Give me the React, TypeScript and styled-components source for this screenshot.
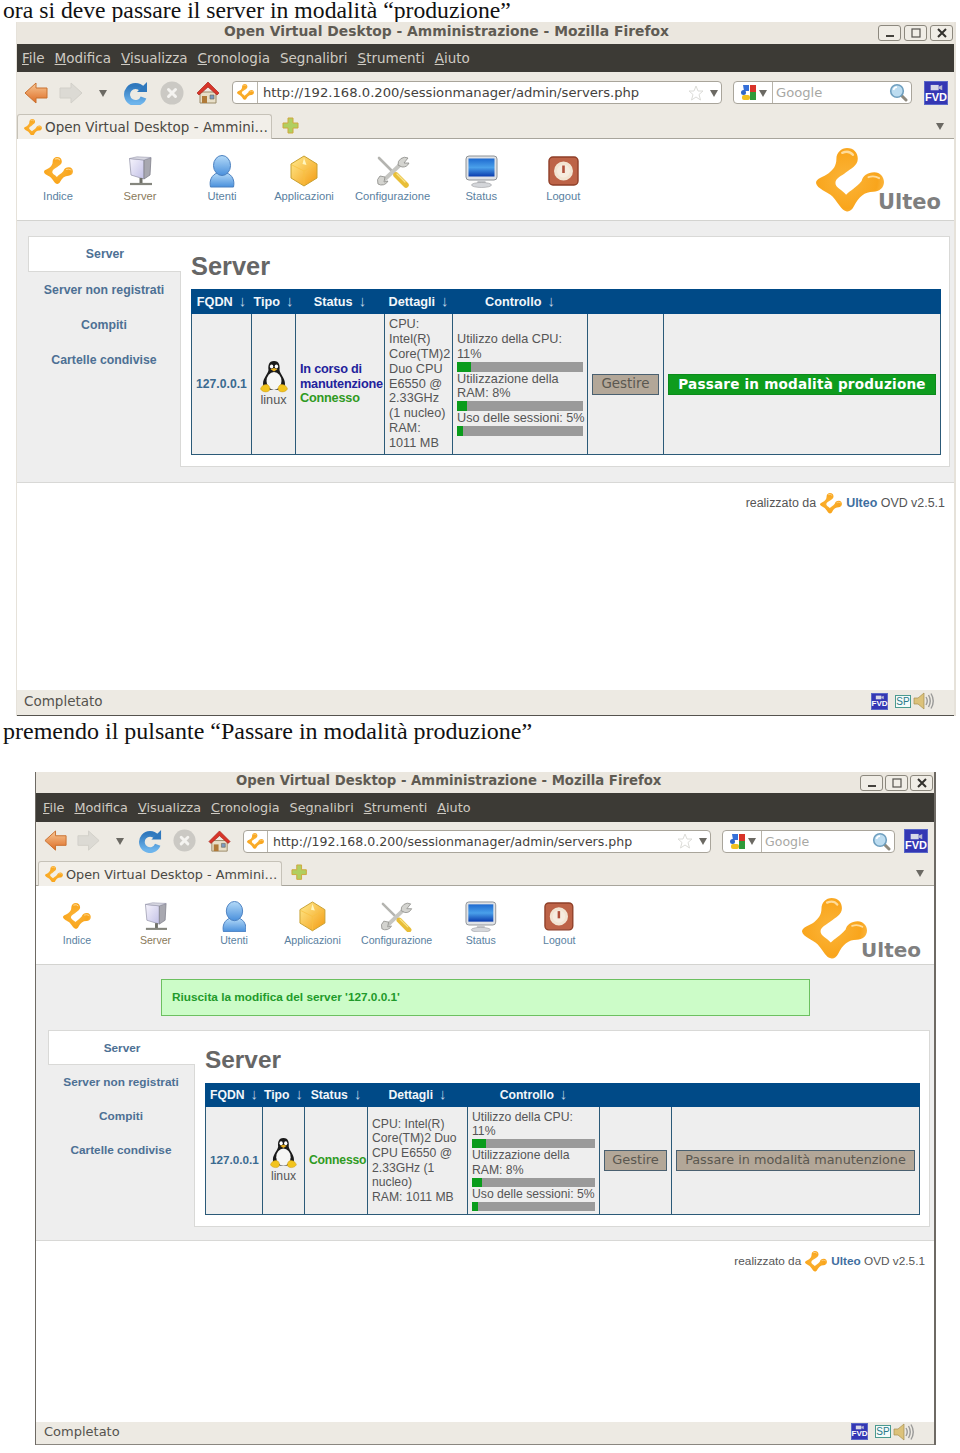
import React from "react";
import styled, { createGlobalStyle } from "styled-components";

const Global = createGlobalStyle`
  html, body { margin: 0; padding: 0; background: #fff; }
  body { width: 960px; height: 1453px; overflow: hidden; }
`;

const UI = `"DejaVu Sans", sans-serif`;
const WEB = `"Liberation Sans", Arial, sans-serif`;

type Cfg = {
  left: number; width: number; frame: string; edge: string; titleLeft: number; titleFs: number;
  titleH: number; btnW: number; btnGap: number; menuH: number; menuFs: number; menuPad: number; menuGap: number;
  navH: number; navPad: number; slots: number[]; urlMl: number; urlW: number; urlIcon: number; searchGap: number; searchW: number; fvdGap: number; urlFs: number;
  tabRowH: number; tabMl: number; tabW: number; tabFs: number; plusMl: number;
  toolH: number; toolPad: number; toolTop: number; toolIconH: number; itemW: number; itemGap: number; labelFs: number; logoRight: number; logoW: number; logoFs: number;
  greyTop: number; greyBottom: number; panelL: number; panelR: number;
  sideW: number; tabH: number; itemH: number; sideFs: number; contentPad: number;
  titleBlock: number; headingFs: number; headFs: number; tableW: number; cols: number[]; headH: number; rowH: number; cellFs: number; lh: number; bar: number;
  contentBottom: number; footerH: number; footerPad: number; footerFs: number; footerRight: number;
  statusH: number; statusPad: number; statusFs: number; statusRight: number;
  details: string[]; btnFs: number; iconScale: number; status2: boolean; actionFs: number; actionSp: number;
};

const A: Cfg = {
  left: 16, width: 940, frame: "#e6e2da", edge: "#55534e", titleLeft: 207, titleFs: 13.87, titleH: 22, btnW: 23, btnGap: 3,
  menuH: 28, menuFs: 13.5, menuPad: 5, menuGap: 10, navH: 41, navPad: 0, slots: [37, 34, 30, 35, 37, 36], urlMl: 6, urlW: 490, urlIcon: 25, searchGap: 11, searchW: 179, fvdGap: 12, urlFs: 13.15,
  tabRowH: 25, tabMl: 0, tabW: 255, tabFs: 13.5, plusMl: 10,
  toolH: 82, toolPad: 10, toolTop: 14, toolIconH: 36, itemW: 62, itemGap: 20, labelFs: 11.2, logoRight: 13, logoW: 68, logoFs: 21,
  greyTop: 15, greyBottom: 15, panelL: 11, panelR: 4, sideW: 152, tabH: 36, itemH: 35, sideFs: 12.3, contentPad: 10,
  titleBlock: 52, headingFs: 25.4, headFs: 12.7, tableW: 749, cols: [60, 44, 89, 68, 135, 76, 277], headH: 23, rowH: 141, cellFs: 12.7, lh: 14.9, bar: 10,
  contentBottom: 11, footerH: 207, footerPad: 10, footerFs: 12.45, footerRight: 9,
  statusH: 26, statusPad: 7, statusFs: 13.5, statusRight: 19,
  details: ["CPU:", "Intel(R)", "Core(TM)2", "Duo CPU", "E6550 @", "2.33GHz", "(1 nucleo)", "RAM:", "1011 MB"],
  btnFs: 13.4, iconScale: 1, status2: true, actionFs: 13.6, actionSp: 0.18,
};

const B: Cfg = {
  left: 35, width: 901, frame: "#6e6a64", edge: "#8a8780", titleLeft: 200, titleFs: 13.25, titleH: 21, btnW: 23, btnGap: 2,
  menuH: 29, menuFs: 12.8, menuPad: 7, menuGap: 10, navH: 38, navPad: 3, slots: [34, 32, 30, 32, 35, 36], urlMl: 5, urlW: 468, urlIcon: 24, searchGap: 11, searchW: 173, fvdGap: 9, urlFs: 12.55,
  tabRowH: 25, tabMl: 2, tabW: 244, tabFs: 12.8, plusMl: 9,
  toolH: 79, toolPad: 11, toolTop: 14, toolIconH: 33, itemW: 60, itemGap: 18.5, labelFs: 10.6, logoRight: 13, logoW: 65, logoFs: 20,
  greyTop: 14, greyBottom: 13, panelL: 12, panelR: 4, sideW: 146, tabH: 35, itemH: 34, sideFs: 11.8, contentPad: 10,
  titleBlock: 52, headingFs: 24.4, headFs: 12.2, tableW: 714, cols: [57, 42, 63, 100, 132, 72, 248], headH: 22, rowH: 108, cellFs: 12.2, lh: 14.6, bar: 9.5,
  contentBottom: 11, footerH: 181, footerPad: 10, footerFs: 11.8, footerRight: 9,
  statusH: 23, statusPad: 8, statusFs: 13, statusRight: 19,
  details: ["CPU: Intel(R)", "Core(TM)2 Duo", "CPU E6550 @", "2.33GHz (1", "nucleo)", "RAM: 1011 MB"],
  btnFs: 13, iconScale: 0.96, status2: false, actionFs: 12.8, actionSp: 0,
};

const Page = styled.div`
  display: flex;
  flex-direction: column;
  width: 960px;
`;
const Caption = styled.p<{ $h: number; $after: number; $fs: number }>`
  margin: 0 0 ${(p) => p.$after}px;
  padding-left: 3px;
  height: ${(p) => p.$h}px;
  font: 400 ${(p) => p.$fs}px/${(p) => p.$h - 2}px "Liberation Serif", "Times New Roman", serif;
  color: #111;
  white-space: nowrap;
`;
const Win = styled.section<{ $left: number; $width: number; $frame: string }>`
  margin-left: ${(p) => p.$left}px;
  width: ${(p) => p.$width}px;
  box-sizing: border-box;
  border-left: 1px solid ${(p) => p.$frame};
  border-right: 2px solid ${(p) => p.$frame};
  background: #fff;
`;
const TitleBar = styled.header<{ $h: number; $l: number; $fs: number }>`
  display: flex;
  align-items: center;
  height: ${(p) => p.$h}px;
  padding-left: ${(p) => p.$l}px;
  background: #ebe7df;
  font: 700 ${(p) => p.$fs}px ${UI};
  color: #5f5b53;
  white-space: nowrap;
`;
const TitleText = styled.span`
  margin-bottom: 4px;
`;
const WinBtns = styled.div<{ $gap: number }>`
  display: flex;
  gap: ${(p) => p.$gap}px;
  margin-left: auto;
  margin-right: 1px;
`;
const WinBtn = styled.span<{ $w: number }>`
  display: flex;
  align-items: center;
  justify-content: center;
  width: ${(p) => p.$w}px;
  height: 16px;
  box-sizing: border-box;
  border: 1px solid #8c887e;
  border-radius: 3px;
  background: #f0ede6;
`;
const MenuBar = styled.nav<{ $h: number; $pad: number; $gap: number; $fs: number }>`
  display: flex;
  align-items: center;
  height: ${(p) => p.$h}px;
  padding-left: ${(p) => p.$pad}px;
  gap: ${(p) => p.$gap}px;
  background: #3c3a35;
  color: #cfcbc3;
  font: 400 ${(p) => p.$fs}px ${UI};
`;
const NavBar = styled.div<{ $h: number; $pad: number }>`
  display: flex;
  align-items: center;
  height: ${(p) => p.$h}px;
  padding-left: ${(p) => p.$pad}px;
  background: #edeae3;
`;
const NavSlot = styled.span<{ $w: number }>`
  display: flex;
  align-items: center;
  justify-content: center;
  width: ${(p) => p.$w}px;
`;
const Field = styled.div<{ $w: number; $ml: number }>`
  display: flex;
  align-items: center;
  box-sizing: border-box;
  width: ${(p) => p.$w}px;
  height: 23px;
  margin-left: ${(p) => p.$ml}px;
  border: 1px solid #a9a59b;
  border-radius: 4px;
  background: #fff;
`;
const FieldIcon = styled.span<{ $w: number }>`
  display: flex;
  align-items: center;
  justify-content: center;
  gap: 2px;
  box-sizing: border-box;
  width: ${(p) => p.$w}px;
  height: 100%;
  border-right: 1px solid #b8b4aa;
`;
const UrlText = styled.span<{ $fs: number }>`
  margin-left: 5px;
  font: 400 ${(p) => p.$fs}px ${UI};
  color: #44423d;
  white-space: nowrap;
`;
const Hint = styled.span<{ $fs: number }>`
  margin-left: 3px;
  font: 400 ${(p) => p.$fs}px ${UI};
  color: #a8a8a4;
`;
const FieldEnd = styled.span`
  display: flex;
  align-items: center;
  gap: 6px;
  margin-left: auto;
  margin-right: 3px;
`;
const Fvd = styled.span<{ $w: number; $fs: number; $ml?: number }>`
  display: flex;
  flex-direction: column;
  align-items: center;
  justify-content: flex-end;
  box-sizing: border-box;
  width: ${(p) => p.$w}px;
  height: ${(p) => p.$w}px;
  margin-left: ${(p) => p.$ml ?? 0}px;
  background: #3437b4;
  border: 1px solid #5a68c8;
  color: #fff;
  font: 700 ${(p) => p.$fs}px/1 ${WEB};
  padding-bottom: 1px;
`;
const TabRow = styled.div<{ $h: number; $ml: number }>`
  display: flex;
  align-items: flex-end;
  height: ${(p) => p.$h}px;
  padding-left: ${(p) => p.$ml}px;
  background: #edeae3;
  border-bottom: 1px solid #a8a59c;
`;
const Tab = styled.div<{ $w: number; $fs: number }>`
  display: flex;
  align-items: center;
  gap: 3px;
  box-sizing: border-box;
  width: ${(p) => p.$w}px;
  height: 100%;
  margin-bottom: -1px;
  padding-left: 6px;
  border: 1px solid #c6c2b8;
  border-bottom: 0;
  border-radius: 3px 3px 0 0;
  background: #f2efe9;
  font: 400 ${(p) => p.$fs}px ${UI};
  color: #4a4843;
  white-space: nowrap;
`;
const PlusWrap = styled.span<{ $ml: number }>`
  display: flex;
  align-self: center;
  margin-left: ${(p) => p.$ml}px;
`;
const TabMenu = styled.span`
  display: flex;
  align-self: center;
  margin-left: auto;
  margin-right: 10px;
`;
const Toolbar = styled.div<{ $h: number; $pad: number; $top: number; $gap: number }>`
  display: flex;
  gap: ${(p) => p.$gap}px;
  box-sizing: border-box;
  height: ${(p) => p.$h}px;
  padding: ${(p) => p.$top}px 0 0 ${(p) => p.$pad}px;
  border-bottom: 1px solid #d3d3d0;
  background: #fff;
`;
const ToolItem = styled.div<{ $w: number; $fs: number; $active?: boolean }>`
  display: flex;
  flex-direction: column;
  align-items: center;
  min-width: ${(p) => p.$w}px;
  font: 400 ${(p) => p.$fs}px/14px ${WEB};
  color: ${(p) => (p.$active ? "#8a7a5a" : "#5a7f9f")};
`;
const ToolIcon = styled.span<{ $h: number }>`
  display: flex;
  align-items: center;
  justify-content: center;
  height: ${(p) => p.$h}px;
`;
const Logo = styled.div<{ $r: number }>`
  display: flex;
  align-items: flex-end;
  margin: -6px ${(p) => p.$r}px 0 auto;
  height: 65px;
`;
const LogoText = styled.span<{ $fs: number }>`
  margin-left: -6px;
  font: 700 ${(p) => p.$fs}px/${(p) => p.$fs - 2}px ${UI};
  color: #7f7f7f;
`;
const Grey = styled.main<{ $top: number; $bottom: number; $l: number; $r: number }>`
  display: flex;
  flex-direction: column;
  gap: 14px;
  padding: ${(p) => p.$top}px ${(p) => p.$r}px ${(p) => p.$bottom}px ${(p) => p.$l}px;
  background: #eeeeee;
  border-bottom: 1px solid #d8d8d6;
`;
const Message = styled.div`
  box-sizing: border-box;
  width: 649px;
  height: 37px;
  margin-left: 113px;
  padding-left: 10px;
  border: 1px solid #6cc060;
  background: #ccfcc8;
  font: 700 11.8px/35px ${WEB};
  color: #1f9a2b;
`;
const Panel = styled.div`
  display: flex;
`;
const Side = styled.aside<{ $w: number; $fs: number }>`
  flex: none;
  width: ${(p) => p.$w}px;
  font: 700 ${(p) => p.$fs}px ${WEB};
  color: #4d7094;
`;
const SideTab = styled.div<{ $h: number }>`
  position: relative;
  display: flex;
  align-items: center;
  justify-content: center;
  box-sizing: border-box;
  height: ${(p) => p.$h}px;
  margin-right: -1px;
  border: 1px solid #d9d9d7;
  border-right: 0;
  background: #fff;
`;
const SideItem = styled.div<{ $h: number }>`
  display: flex;
  align-items: center;
  justify-content: center;
  height: ${(p) => p.$h}px;
`;
const Content = styled.div<{ $pad: number; $bottom: number }>`
  flex: 1;
  padding: 0 0 ${(p) => p.$bottom}px ${(p) => p.$pad}px;
  border: 1px solid #d9d9d7;
  background: #fff;
`;
const Heading = styled.h1<{ $h: number; $fs: number }>`
  display: flex;
  align-items: center;
  box-sizing: border-box;
  height: ${(p) => p.$h}px;
  margin: 0;
  padding-top: 6px;
  font: 700 ${(p) => p.$fs}px ${WEB};
  color: #666;
`;
const Table = styled.table<{ $w: number; $fs: number; $lh: number }>`
  width: ${(p) => p.$w}px;
  table-layout: fixed;
  border-collapse: collapse;
  font: 400 ${(p) => p.$fs}px/${(p) => p.$lh}px ${WEB};
  color: #555;
`;
const Col = styled.col<{ $w: number }>`
  width: ${(p) => p.$w}px;
`;
const Th = styled.th<{ $h: number }>`
  height: ${(p) => p.$h}px;
  padding: 0;
  background: #004a87;
  border: 1px solid #004a87;
  color: #f2f6fa;
  font-weight: 700;
  text-align: center;
  white-space: nowrap;
`;
const ThArrow = styled.span`
  margin-left: 6px;
  color: #c0d2e4;
  font-size: 15px;
  font-weight: 400;
`;
const Td = styled.td<{ $h: number }>`
  height: ${(p) => p.$h}px;
  padding: 0 4px;
  background: #eeeeee;
  border: 1px solid #2b5a78;
  vertical-align: middle;
  box-sizing: border-box;
`;
const Fqdn = styled.span`
  font-size: 0.96em;
  font-weight: 700;
  color: #3a6a90;
  white-space: nowrap;
`;
const OsCell = styled.div`
  display: flex;
  flex-direction: column;
  align-items: center;
`;
const StatusLine = styled.div<{ $c: string }>`
  font-weight: 700;
  color: ${(p) => p.$c};
  white-space: nowrap;
  letter-spacing: -0.2px;
`;
const Line = styled.div`
  white-space: nowrap;
`;
const Bar = styled.div<{ $h: number }>`
  height: ${(p) => p.$h}px;
  background: #9a9a9a;
`;
const BarFill = styled.div<{ $pct: number }>`
  height: 100%;
  width: ${(p) => p.$pct}%;
  background: #0a9c1c;
`;
const ActionBtn = styled.div<{ $fs: number; $sp?: number; $green?: boolean }>`
  box-sizing: border-box;
  height: 21px;
  border: 1px solid ${(p) => (p.$green ? "#0b8a1a" : "#4a6070")};
  background: ${(p) => (p.$green ? "#0e9c1e" : "#b3a798")};
  color: ${(p) => (p.$green ? "#fff" : "#5a5750")};
  font: ${(p) => (p.$green ? 700 : 400)} ${(p) => p.$fs}px/18px ${UI};
  letter-spacing: ${(p) => p.$sp ?? 0}px;
  text-align: center;
  white-space: nowrap;
`;
const Footer = styled.footer<{ $h: number; $pad: number; $fs: number; $r: number }>`
  display: flex;
  align-items: flex-start;
  justify-content: flex-end;
  gap: 4px;
  box-sizing: border-box;
  height: ${(p) => p.$h}px;
  padding: ${(p) => p.$pad}px ${(p) => p.$r}px 0 0;
  background: #fff;
  font: 400 ${(p) => p.$fs}px/20px ${WEB};
  color: #555;
`;
const Brand = styled.b`
  font-weight: 700;
  color: #3f6f9f;
`;
const StatusBar = styled.div<{ $h: number; $pad: number; $fs: number; $r: number; $edge: string }>`
  display: flex;
  align-items: center;
  box-sizing: border-box;
  height: ${(p) => p.$h}px;
  padding: 0 ${(p) => p.$r}px 3px ${(p) => p.$pad}px;
  background: #edeae3;
  border-bottom: 1px solid ${(p) => p.$edge};
  font: 400 ${(p) => p.$fs}px ${UI};
  color: #55534e;
`;
const StatusIcons = styled.div`
  display: flex;
  align-items: center;
  gap: 7px;
  margin-left: auto;
`;
const Sp = styled.span`
  box-sizing: border-box;
  width: 16px;
  height: 13px;
  margin-right: -5px;
  border: 1px solid #4a9a90;
  background: #f4fbfa;
  color: #2a7a88;
  font: 400 10px/11px ${WEB};
  text-align: center;
`;

const Mark = ({ w }: { w: number }) => (
  <svg width={w} height={(w * 66) / 70} viewBox="0 0 70 66">
    <defs>
      <radialGradient id="ulteoG" cx="0.45" cy="0.5" r="0.65">
        <stop offset="0" stopColor="#fbb53a" />
        <stop offset="0.7" stopColor="#f9a51c" />
        <stop offset="1" stopColor="#fcc25a" />
      </radialGradient>
    </defs>
    <path
      d="M32 0C39 0 43 5 43 11C43 18 36 21 31 25C26 29 20 31 20 36C20 41 27 43 31 48C35 44 41 41 47 34C48 29 53 25 60 25C66 25 70 30 70 35C70 41 65 45 59 45C50 45 44 50 39 60C37 64 34 66 31 65C26 64 24 58 17 50C12 45 1 42 0 36C0 31 8 30 13 26C18 22 21 18 21 11C21 5 26 0 32 0Z"
      fill="url(#ulteoG)"
    />
    <path d="M27 5Q34 2 38 7" fill="none" stroke="#ffdc9a" strokeWidth="2.5" strokeLinecap="round" />
    <path d="M54 30Q60 28 65 31" fill="none" stroke="#ffdc9a" strokeWidth="2" strokeLinecap="round" />
  </svg>
);

const Back = ({ s }: { s: number }) => (
  <svg width={24 * s} height={22 * s} viewBox="0 0 24 22">
    <defs>
      <linearGradient id="backG" x1="0" y1="0" x2="0" y2="1">
        <stop offset="0" stopColor="#f8c896" />
        <stop offset="1" stopColor="#dd6c24" />
      </linearGradient>
    </defs>
    <path d="M1 11L12 1V6H23V16H12V21Z" fill="url(#backG)" stroke="#c9702f" strokeLinejoin="round" />
  </svg>
);
const Forward = ({ s }: { s: number }) => (
  <svg width={24 * s} height={22 * s} viewBox="0 0 24 22">
    <path d="M23 11L12 1V6H1V16H12V21Z" fill="#dcdad4" stroke="#d2d0c9" strokeLinejoin="round" />
  </svg>
);
const Tri = ({ w = 8, c = "#6b6963" }: { w?: number; c?: string }) => (
  <svg width={w} height={w} viewBox="0 0 8 8">
    <path d="M0 1H8L4 8Z" fill={c} />
  </svg>
);
const Reload = ({ s }: { s: number }) => (
  <svg width={24 * s} height={24 * s} viewBox="0 0 24 24">
    <defs>
      <linearGradient id="relG" x1="0" y1="0" x2="0" y2="1">
        <stop offset="0" stopColor="#2f78bd" />
        <stop offset="1" stopColor="#6db4ec" />
      </linearGradient>
    </defs>
    <path d="M18 8A8.5 8.5 0 1 0 19.5 16.5" fill="none" stroke="url(#relG)" strokeWidth="6" />
    <path d="M13 11H23V1Z" fill="#2f78bd" />
  </svg>
);
const Stop = ({ s }: { s: number }) => (
  <svg width={24 * s} height={24 * s} viewBox="0 0 24 24">
    <circle cx="12" cy="12" r="11.5" fill="#cbc9c4" />
    <path d="M8.5 8.5L15.5 15.5M15.5 8.5L8.5 15.5" stroke="#f4f3f0" strokeWidth="3" strokeLinecap="round" />
  </svg>
);
const Home = ({ s }: { s: number }) => (
  <svg width={24 * s} height={23 * s} viewBox="0 0 24 23">
    <path d="M4 11H20V22H4Z" fill="#e8dfc8" stroke="#9a8a68" />
    <path d="M12 1L1 12L3 14L12 6L21 14L23 12Z" fill="#d8352a" stroke="#a8251d" strokeWidth="0.7" />
    <path d="M6 15H11V22H6Z" fill="#b07a38" />
    <path d="M14 14H18V18H14Z" fill="#7a9ac0" stroke="#6a6558" strokeWidth="0.6" />
  </svg>
);
const Star = () => (
  <svg width="16" height="16" viewBox="0 0 16 16">
    <path d="M8 1L10 6H15L11 9.5L12.5 15L8 12L3.5 15L5 9.5L1 6H6Z" fill="#fff" stroke="#dcdcd8" />
  </svg>
);
const GoogleIcon = () => (
  <svg width="17" height="17" viewBox="0 0 17 17">
    <rect x="10" y="1" width="6" height="7" fill="#d8342a" />
    <rect x="10" y="8" width="6" height="8" fill="#2f9a3a" />
    <path d="M3 1H9V7H4Z" fill="#3670d8" />
    <circle cx="3.5" cy="8.5" r="2.5" fill="#2f66c8" />
    <rect x="2" y="11" width="8" height="5" rx="2" fill="#f0c020" />
  </svg>
);
const Lens = () => (
  <svg width="19" height="19" viewBox="0 0 19 19">
    <path d="M12 12L17 17" stroke="#8f8a7e" strokeWidth="3" strokeLinecap="round" />
    <circle cx="8" cy="8" r="6.3" fill="#bcdcf0" stroke="#6f9fbf" strokeWidth="1.6" />
    <path d="M4.5 7A4 4 0 0 1 8 4" fill="none" stroke="#fff" strokeWidth="1.5" />
  </svg>
);
const Cam = ({ w }: { w: number }) => (
  <svg width={w} height={w * 0.45} viewBox="0 0 18 8">
    <rect x="3" y="1" width="9" height="6" fill="#d8d8e8" />
    <path d="M12 3L16 1V7L12 5Z" fill="#b8b8d0" />
  </svg>
);
const Plus = ({ s }: { s: number }) => (
  <svg width={17 * s} height={17 * s} viewBox="0 0 17 17">
    <path d="M6 1H11V6H16V11H11V16H6V11H1V6H6Z" fill="#b0cf60" stroke="#cfa83c" />
  </svg>
);
const ServerIcon = ({ s }: { s: number }) => (
  <svg width={24 * s} height={30 * s} viewBox="0 0 24 30">
    <defs>
      <linearGradient id="srvG" x1="0" y1="0" x2="1" y2="1">
        <stop offset="0" stopColor="#f6f4fc" />
        <stop offset="1" stopColor="#c2c0e6" />
      </linearGradient>
    </defs>
    <path d="M1.5 2.5L16 4V23L3 19Z" fill="url(#srvG)" stroke="#9a9aae" strokeWidth="0.8" />
    <path d="M16 4L23 1.5L22 19L16 23Z" fill="#a8a8b0" stroke="#80808a" strokeWidth="0.8" />
    <path d="M1.5 2.5L9 0.8L23 1.5L16 4Z" fill="#d8d8e2" stroke="#9a9aae" strokeWidth="0.6" />
    <path d="M13 22V28" stroke="#6f7068" strokeWidth="3" />
    <path d="M2 28H24" stroke="#85867e" strokeWidth="2.2" />
  </svg>
);
const UserIcon = ({ s }: { s: number }) => (
  <svg width={26 * s} height={33 * s} viewBox="0 0 26 33">
    <defs>
      <linearGradient id="usrG" x1="0" y1="0" x2="0" y2="1">
        <stop offset="0" stopColor="#b4daf8" />
        <stop offset="1" stopColor="#4a90dc" />
      </linearGradient>
    </defs>
    <path d="M1.5 32C0 25 3 20 8 18H18C23 20 26 25 24.5 32Z" fill="url(#usrG)" stroke="#4a80c0" />
    <ellipse cx="13" cy="10.5" rx="8.5" ry="10" fill="url(#usrG)" stroke="#4a80c0" />
  </svg>
);
const AppIcon = ({ s }: { s: number }) => (
  <svg width={28 * s} height={32 * s} viewBox="0 0 28 32">
    <defs>
      <linearGradient id="appG" x1="0" y1="0" x2="1" y2="1">
        <stop offset="0" stopColor="#ffec90" />
        <stop offset="1" stopColor="#f39a10" />
      </linearGradient>
    </defs>
    <path d="M14 1L27 9V23L14 31L1 23V9Z" fill="url(#appG)" stroke="#c8a030" strokeLinejoin="round" />
    <path d="M2 10L14 16L26 10M14 16V30" fill="none" stroke="#f8c040" strokeWidth="0.8" />
    <path d="M14 3L12.5 9L16.5 10Z" fill="#fff6c0" />
  </svg>
);
const ToolsIcon = ({ s }: { s: number }) => (
  <svg width={34 * s} height={33 * s} viewBox="0 0 34 33">
    <path d="M3 3L20 20" stroke="#b4b4b0" strokeWidth="2.6" strokeLinecap="round" />
    <path d="M27 7L8 25" stroke="#c6c6c2" strokeWidth="4" />
    <path d="M32 3A7 7 0 0 0 22 10L26 12A7 7 0 0 0 33 8L28 8ZM2 29A7 7 0 0 1 4 21L9 22L8 27L12 26A7 7 0 0 1 2 29Z" fill="#d4d4d0" stroke="#8c8c88" strokeWidth="0.8" />
    <path d="M20 20L30 30" stroke="#e8be38" strokeWidth="5.5" strokeLinecap="round" />
    <path d="M21 19L29 27" stroke="#f8e48c" strokeWidth="1.2" strokeLinecap="round" />
  </svg>
);
const MonitorIcon = ({ s }: { s: number }) => (
  <svg width={33 * s} height={33 * s} viewBox="0 0 33 33">
    <defs>
      <linearGradient id="monG" x1="0" y1="0" x2="0" y2="1">
        <stop offset="0" stopColor="#1e6ad0" />
        <stop offset="0.5" stopColor="#4aa0ea" />
        <stop offset="1" stopColor="#0a3cae" />
      </linearGradient>
    </defs>
    <rect x="1" y="1" width="31" height="24" rx="3" fill="#dfe2e6" stroke="#8e9296" />
    <rect x="3.5" y="3.5" width="26" height="18" fill="url(#monG)" />
    <path d="M13 25H20L21 28H12Z" fill="#c4c6ca" />
    <ellipse cx="16.5" cy="30" rx="10" ry="2.5" fill="#d4d6da" stroke="#9a9ca0" strokeWidth="0.6" />
  </svg>
);
const LogoutIcon = ({ s }: { s: number }) => (
  <svg width={31 * s} height={30 * s} viewBox="0 0 31 30">
    <rect x="1" y="1" width="29" height="28" rx="4" fill="#bd6347" stroke="#8f3f28" strokeWidth="1.4" />
    <circle cx="15.5" cy="15" r="8" fill="#f6ecdf" stroke="#f2e4d2" strokeWidth="3" />
    <path d="M15.5 9.5V17" stroke="#b0503a" strokeWidth="2.6" />
  </svg>
);
const Penguin = ({ s }: { s: number }) => (
  <svg width={28 * s} height={33 * s} viewBox="0 0 28 33">
    <path d="M14 1C8.5 1 8 6 8.5 10C8 14 3 18 3 24C3 28 9 30 14 30C19 30 25 28 25 24C25 18 20 14 19.5 10C20 6 19.5 1 14 1Z" fill="#1a1a1a" />
    <ellipse cx="14" cy="21" rx="7.5" ry="9" fill="#f6f6f4" />
    <ellipse cx="11.6" cy="6.5" rx="1.7" ry="2.1" fill="#fff" />
    <ellipse cx="16.4" cy="6.5" rx="1.7" ry="2.1" fill="#fff" />
    <path d="M10.5 9.2L14 8L17.5 9.2L14 11.5Z" fill="#e8b020" />
    <path d="M0.5 29C2 24.5 6 24 8 25C10.5 27 10.5 30.5 8 31.5C5 32.5 2 31.5 0.5 29ZM27.5 29C26 24.5 22 24 20 25C17.5 27 17.5 30.5 20 31.5C23 32.5 26 31.5 27.5 29Z" fill="#f2c41e" stroke="#c89810" strokeWidth="0.5" />
  </svg>
);
const Speaker = () => (
  <svg width="22" height="18" viewBox="0 0 22 18">
    <path d="M1 6H5L11 1V17L5 12H1Z" fill="#dcc27a" stroke="#a89050" strokeWidth="0.7" />
    <path d="M13 5Q15.5 9 13 13M15.5 3Q19 9 15.5 15M18 1.5Q22.5 9 18 16.5" fill="none" stroke="#9a9a98" strokeWidth="1.4" />
  </svg>
);

const MENU: [string, string, string][] = [
  ["", "F", "ile"],
  ["", "M", "odifica"],
  ["", "V", "isualizza"],
  ["", "C", "ronologia"],
  ["Se", "g", "nalibri"],
  ["", "S", "trumenti"],
  ["", "A", "iuto"],
];

const BrowserWindow = ({ c, message, actions }: { c: Cfg; message?: string; actions: React.ReactNode }) => {
  const s = c.iconScale;
  const tools: [string, React.ReactNode][] = [
    ["Indice", <Mark w={29 * s} />],
    ["Server", <ServerIcon s={s} />],
    ["Utenti", <UserIcon s={s} />],
    ["Applicazioni", <AppIcon s={s} />],
    ["Configurazione", <ToolsIcon s={s} />],
    ["Status", <MonitorIcon s={s} />],
    ["Logout", <LogoutIcon s={s} />],
  ];
  const nav = [<Back s={s} />, <Forward s={s} />, <Tri />, <Reload s={s} />, <Stop s={s} />, <Home s={s} />];
  return (
    <Win $left={c.left} $width={c.width} $frame={c.frame}>
      <TitleBar $h={c.titleH} $l={c.titleLeft} $fs={c.titleFs}>
        <TitleText>Open Virtual Desktop - Amministrazione - Mozilla Firefox</TitleText>
        <WinBtns $gap={c.btnGap}>
          <WinBtn $w={c.btnW}>
            <svg width="10" height="10" viewBox="0 0 10 10"><path d="M1 8H9" stroke="#44423d" strokeWidth="2" /></svg>
          </WinBtn>
          <WinBtn $w={c.btnW}>
            <svg width="10" height="10" viewBox="0 0 10 10"><rect x="1" y="1" width="8" height="8" fill="none" stroke="#55534e" strokeWidth="1.2" /></svg>
          </WinBtn>
          <WinBtn $w={c.btnW}>
            <svg width="10" height="10" viewBox="0 0 10 10"><path d="M1 1L9 9M9 1L1 9" stroke="#33312d" strokeWidth="2" /></svg>
          </WinBtn>
        </WinBtns>
      </TitleBar>
      <MenuBar $h={c.menuH} $pad={c.menuPad} $gap={c.menuGap} $fs={c.menuFs}>
        {MENU.map(([a, u, b]) => (
          <span key={u + b}>{a}<u>{u}</u>{b}</span>
        ))}
      </MenuBar>
      <NavBar $h={c.navH} $pad={c.navPad}>
        {nav.map((n, i) => (
          <NavSlot key={i} $w={c.slots[i]}>{n}</NavSlot>
        ))}
        <Field $w={c.urlW} $ml={c.urlMl}>
          <FieldIcon $w={c.urlIcon}><Mark w={17} /></FieldIcon>
          <UrlText $fs={c.urlFs}>http://192.168.0.200/sessionmanager/admin/servers.php</UrlText>
          <FieldEnd><Star /><Tri /></FieldEnd>
        </Field>
        <Field $w={c.searchW} $ml={c.searchGap}>
          <FieldIcon $w={39}><GoogleIcon /><Tri /></FieldIcon>
          <Hint $fs={c.urlFs}>Google</Hint>
          <FieldEnd><Lens /></FieldEnd>
        </Field>
        <Fvd $w={24} $fs={11} $ml={c.fvdGap}><Cam w={16} />FVD</Fvd>
      </NavBar>
      <TabRow $h={c.tabRowH} $ml={c.tabMl}>
        <Tab $w={c.tabW} $fs={c.tabFs}>
          <Mark w={18} />
          Open Virtual Desktop - Ammini…
        </Tab>
        <PlusWrap $ml={c.plusMl}><Plus s={s} /></PlusWrap>
        <TabMenu><Tri /></TabMenu>
      </TabRow>
      <Toolbar $h={c.toolH} $pad={c.toolPad} $top={c.toolTop} $gap={c.itemGap}>
        {tools.map(([label, icon]) => (
          <ToolItem key={label} $w={c.itemW} $fs={c.labelFs} $active={label === "Server"}>
            <ToolIcon $h={c.toolIconH}>{icon}</ToolIcon>
            {label}
          </ToolItem>
        ))}
        <Logo $r={c.logoRight}>
          <Mark w={c.logoW} />
          <LogoText $fs={c.logoFs}>Ulteo</LogoText>
        </Logo>
      </Toolbar>
      <Grey $top={c.greyTop} $bottom={c.greyBottom} $l={c.panelL} $r={c.panelR}>
        {message && <Message>{message}</Message>}
        <Panel>
          <Side $w={c.sideW} $fs={c.sideFs}>
            <SideTab $h={c.tabH}>Server</SideTab>
            <SideItem $h={c.itemH}>Server non registrati</SideItem>
            <SideItem $h={c.itemH}>Compiti</SideItem>
            <SideItem $h={c.itemH}>Cartelle condivise</SideItem>
          </Side>
          <Content $pad={c.contentPad} $bottom={c.contentBottom}>
            <Heading $h={c.titleBlock} $fs={c.headingFs}>Server</Heading>
            <Table $w={c.tableW} $fs={c.cellFs} $lh={c.lh}>
              <colgroup>
                {c.cols.map((w, i) => <Col key={i} $w={w} />)}
              </colgroup>
              <thead>
                <tr>
                  {["FQDN", "Tipo", "Status", "Dettagli", "Controllo"].map((h) => (
                    <Th key={h} $h={c.headH}>{h}<ThArrow>↓</ThArrow></Th>
                  ))}
                  <Th $h={c.headH} />
                  <Th $h={c.headH} />
                </tr>
              </thead>
              <tbody>
                <tr>
                  <Td $h={c.rowH}><Fqdn>127.0.0.1</Fqdn></Td>
                  <Td $h={c.rowH}>
                    <OsCell><Penguin s={s} />linux</OsCell>
                  </Td>
                  <Td $h={c.rowH}>
                    {c.status2 && <StatusLine $c="#22229c">In corso di</StatusLine>}
                    {c.status2 && <StatusLine $c="#22229c">manutenzione</StatusLine>}
                    <StatusLine $c="#2f9a22">Connesso</StatusLine>
                  </Td>
                  <Td $h={c.rowH}>
                    {c.details.map((d) => <Line key={d}>{d}</Line>)}
                  </Td>
                  <Td $h={c.rowH}>
                    <Line>Utilizzo della CPU:</Line>
                    <Line>11%</Line>
                    <Bar $h={c.bar}><BarFill $pct={11} /></Bar>
                    <Line>Utilizzazione della</Line>
                    <Line>RAM: 8%</Line>
                    <Bar $h={c.bar}><BarFill $pct={8} /></Bar>
                    <Line>Uso delle sessioni: 5%</Line>
                    <Bar $h={c.bar}><BarFill $pct={5} /></Bar>
                  </Td>
                  <Td $h={c.rowH}><ActionBtn $fs={c.btnFs}>Gestire</ActionBtn></Td>
                  <Td $h={c.rowH}>{actions}</Td>
                </tr>
              </tbody>
            </Table>
          </Content>
        </Panel>
      </Grey>
      <Footer $h={c.footerH} $pad={c.footerPad} $fs={c.footerFs} $r={c.footerRight}>
        realizzato da <Mark w={22} /> <span><Brand>Ulteo</Brand> OVD v2.5.1</span>
      </Footer>
      <StatusBar $h={c.statusH} $pad={c.statusPad} $fs={c.statusFs} $r={c.statusRight} $edge={c.edge}>
        Completato
        <StatusIcons>
          <Fvd $w={17} $fs={8}><Cam w={11} />FVD</Fvd>
          <Sp>SP</Sp>
          <Speaker />
        </StatusIcons>
      </StatusBar>
    </Win>
  );
};

export default function App() {
  return (
    <Page>
      <Global />
      <Caption $h={22} $after={0} $fs={23.7}>ora si deve passare il server in modalità “produzione”</Caption>
      <BrowserWindow
        c={A}
        actions={<ActionBtn $green $fs={A.actionFs} $sp={A.actionSp}>Passare in modalità produzione</ActionBtn>}
      />
      <Caption $h={32} $after={24} $fs={24}>premendo il pulsante “Passare in modalità produzione”</Caption>
      <BrowserWindow
        c={B}
        message="Riuscita la modifica del server '127.0.0.1'"
        actions={<ActionBtn $fs={B.actionFs} $sp={B.actionSp}>Passare in modalità manutenzione</ActionBtn>}
      />
    </Page>
  );
}
